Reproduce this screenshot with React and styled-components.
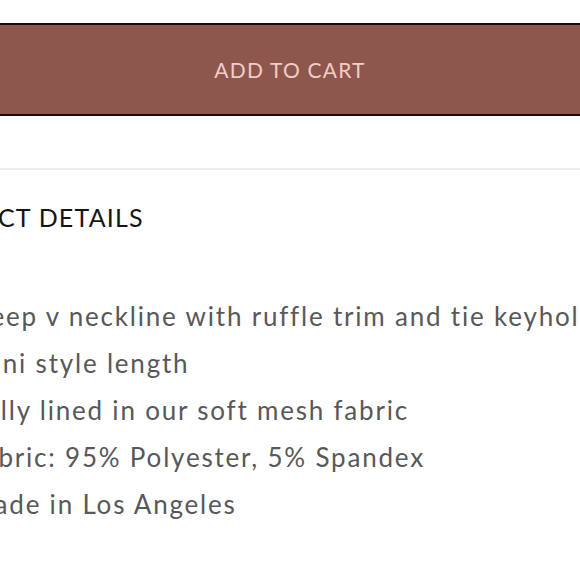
import React from 'react';
import styled, { createGlobalStyle } from 'styled-components';

const GlobalStyle = createGlobalStyle`
  html, body {
    margin: 0;
    padding: 0;
    background: #ffffff;
    overflow: hidden;
  }
`;

const Page = styled.div`
  width: 580px;
  height: 580px;
  overflow: hidden;
  font-family: Lato, "Open Sans", sans-serif;
`;

const Inner = styled.div`
  margin-left: -96px;
  padding-top: 23px;
  width: 772px;
`;

const CartButton = styled.button`
  display: block;
  width: 100%;
  height: 93px;
  background: #8e574d;
  border: 2px solid #1a0c0a;
  color: #f2cdc6;
  font-family: inherit;
  font-size: 21px;
  letter-spacing: 1.2px;
  text-transform: uppercase;
  padding: 0 96px;
  text-align: center;
  cursor: pointer;
`;

const Divider = styled.hr`
  border: none;
  border-top: 2px solid #ececec;
  margin: 52px 0 0 0;
`;

const Heading = styled.h3`
  margin: 33px 0 0 0;
  font-size: 25px;
  font-weight: 400;
  letter-spacing: 1.2px;
  color: #151515;
  line-height: 28px;
`;

const List = styled.ul`
  list-style: none;
  margin: 62px 0 0 0;
  padding: 0 0 0 65px;
`;

const Item = styled.li`
  font-size: 26px;
  line-height: 47px;
  letter-spacing: 1.8px;
  color: #585858;
  white-space: nowrap;
`;

const details = [
  'Deep v neckline with ruffle trim and tie keyhole',
  'Mini style length',
  'Fully lined in our soft mesh fabric',
  'Fabric: 95% Polyester, 5% Spandex',
  'Made in Los Angeles',
];

export default function App() {
  return (
    <Page>
      <GlobalStyle />
      <Inner>
        <CartButton>Add to cart</CartButton>
        <Divider />
        <Heading>PRODUCT DETAILS</Heading>
        <List>
          {details.map((d) => (
            <Item key={d}>{d}</Item>
          ))}
        </List>
      </Inner>
    </Page>
  );
}
